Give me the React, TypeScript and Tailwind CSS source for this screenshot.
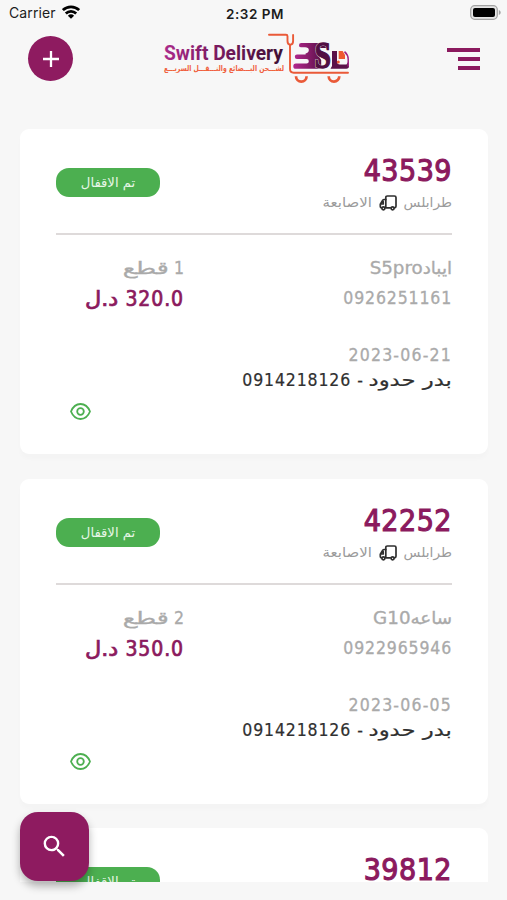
import { MdSearch } from 'react-icons/md';

interface Shipment {
  id: string;
  status: string;
  city: string;
  area: string;
  item: string;
  phone: string;
  pieces: number;
  price: string;
  date: string;
  customer: string;
  contact: string;
}

const shipments: Shipment[] = [
  {
    id: '43539',
    status: 'تم الاقفال',
    city: 'طرابلس',
    area: 'الاصابعة',
    item: 'ايبادS5pro',
    phone: '0926251161',
    pieces: 1,
    price: '320.0',
    date: '2023-06-21',
    customer: 'بدر حدود',
    contact: '0914218126',
  },
  {
    id: '42252',
    status: 'تم الاقفال',
    city: 'طرابلس',
    area: 'الاصابعة',
    item: 'ساعهG10',
    phone: '0922965946',
    pieces: 2,
    price: '350.0',
    date: '2023-06-05',
    customer: 'بدر حدود',
    contact: '0914218126',
  },
];

const nextShipment = { id: '39812', status: 'تم الاقفال' };

function StatusBar() {
  return (
    <div className="grid h-7 grid-cols-3 items-center pl-[9px] pr-[6px] font-['Inter',sans-serif] text-[14px] text-[#1c1c1c]">
      <div className="-mt-1 flex items-center gap-[6px]">
        <span className="tracking-[0.1px]">Carrier</span>
        <svg width="18" height="14" viewBox="0 0 18 14" fill="none" stroke="#000" strokeWidth="2.7">
          <path d="M0.9 5.1a11.6 11.6 0 0 1 16.2 0" />
          <path d="M3.8 8.5a7.4 7.4 0 0 1 10.4 0" />
          <path d="M9 13.8 5.9 10.7a4.5 4.5 0 0 1 6.200 0Z" fill="#000" stroke="none" />
        </svg>
      </div>
      <span className="text-center text-[13.500px] font-semibold tracking-[0.500px]">2:32 PM</span>
      <svg className="-mt-[3px] justify-self-end" width="31" height="15" viewBox="0 0 31 15">
        <rect x="0.700" y="0.700" width="26.600" height="13.600" rx="4" fill="#e6e6e6" stroke="#a3a3a3" strokeWidth="1.300" />
        <rect x="3" y="3" width="22" height="9" rx="2" fill="#000" />
        <path d="M28.800 5v5c1.200-.5 1.900-1.400 1.900-2.500S30 5.500 28.800 5Z" fill="#a3a3a3" />
      </svg>
    </div>
  );
}

function Logo() {
  return (
    <svg width="188" height="52" viewBox="0 0 188 52" fill="none">
      <defs>
        <linearGradient id="word" gradientUnits="userSpaceOnUse" x1="2" y1="0" x2="120" y2="0">
          <stop offset="0" stopColor="#ab2a8b" />
          <stop offset="0.45" stopColor="#7a1a60" />
          <stop offset="1" stopColor="#3f0f35" />
        </linearGradient>
        <linearGradient id="mark" gradientUnits="userSpaceOnUse" x1="132" y1="0" x2="166" y2="0">
          <stop offset="0" stopColor="#b0278c" />
          <stop offset="0.4" stopColor="#8a1c6c" />
          <stop offset="1" stopColor="#430d37" />
        </linearGradient>
      </defs>
      <text
        x="2"
        y="26.500"
        textLength="119"
        lengthAdjust="spacingAndGlyphs"
        fill="url(#word)"
        className="font-['Roboto',sans-serif] text-[19.500px] font-bold"
      >
        Swift Delivery
      </text>
      <text
        x="122"
        y="38"
        direction="rtl"
        textLength="120"
        lengthAdjust="spacingAndGlyphs"
        fill="#f0603c"
        className="font-['DejaVu_Sans',sans-serif] text-[8px] font-bold"
      >
        لشـــحن البـــضائع والنـــقـــل السريـــع
      </text>
      <g stroke="#ea5a38" strokeWidth="1.900" strokeLinecap="round" strokeLinejoin="round">
        <path d="M107 1.800h17q1.500 0 1.500 1.500V8q0 3.700 2.800 3.700T131.100 8V2" />
        <path d="M128 12V36q0 3.700 3.700 3.700H186" />
        <path d="M134 43.300a5.300 5.300 0 0 0 10.600 0" strokeWidth="2.700" strokeLinecap="butt" />
        <path d="M166.700 43.300a5.300 5.300 0 0 0 10.600 0" strokeWidth="2.700" strokeLinecap="butt" />
      </g>
      <path
        d="M139.200 10h26v5h-8l-2 6 4 6v8.800h-25.300a2.600 2.600 0 0 1 0-5.200h10.600a2.200 2.200 0 0 0 0-4.600H135a2.200 2.200 0 0 1 0-4.400h8.500a2 2 0 0 0 0-1.600h-4.300v-.4h5a1.800 1.800 0 0 0 0-5.200h-5a2.200 2.200 0 0 1 0-4.400Z"
        fill="url(#mark)"
      />
      <path d="M137 14.600h6a3 3 0 0 1 0 6h-6Z" fill="#f7f7f7" />
      <text x="152.500" y="35.300" fill="#f7f7f7" stroke="#f7f7f7" strokeWidth="1.800" textLength="16.500" lengthAdjust="spacingAndGlyphs" className="font-['Liberation_Serif',serif] text-[37px] font-bold">
        S
      </text>
      <text x="152.500" y="35.300" fill="#510f43" stroke="#510f43" strokeWidth="1.300" textLength="16.500" lengthAdjust="spacingAndGlyphs" className="font-['Liberation_Serif',serif] text-[37px] font-bold">
        S
      </text>
      <path d="M170 18h5v10.500q0 3 3 3h6.500l2.500-4V33q0 2.700-2.700 2.700h-15.800l1.500-2.700Z" fill="#5b1149" />
      <path d="M176.700 18h4l2.300 4v4h-6.300Z" fill="#ee5930" />
      <path d="M182.500 18.600q3.700 3.400 3.700 7.400v7.500" stroke="#a32484" strokeWidth="1.500" />
      <circle cx="176.300" cy="29" r="1.500" fill="#ee5930" />
    </svg>
  );
}

function TruckIcon() {
  return (
    <svg width="18" height="16" viewBox="0 0 18 16" fill="none" stroke="#2f2f2f" strokeWidth="1.700" strokeLinejoin="round" strokeLinecap="round">
      <path d="M6.800 12.800V2.600Q6.800 1 8.400 1h7Q17 1 17 2.600v8.600q0 1.600-1.600 1.600M6.800 12.800h4.600" />
      <path d="M6.800 4.500H5.300q-1.100 0-1.700 1L1.300 9.200v2.300q0 1.300 1 1.300M1.500 9h2.700V6.500" />
      <circle cx="4.400" cy="13.300" r="1.500" />
      <circle cx="13.600" cy="13.300" r="1.500" />
    </svg>
  );
}

function EyeIcon() {
  return (
    <svg width="21" height="17" viewBox="0 0 21 17" fill="none" stroke="#4caf50" strokeWidth="1.800">
      <path d="M1 8.500C3 3.600 6.500 1 10.500 1s7.500 2.600 9.500 7.500C18 13.400 14.500 16 10.500 16S3 13.400 1 8.500Z" strokeLinejoin="round" />
      <circle cx="10.500" cy="8.500" r="3.300" />
    </svg>
  );
}

function ShipmentId({ id }: { id: string }) {
  return (
    <span className="h-9 text-[30px] leading-[35px] tracking-[0.500px] text-[#8b1a5e] [-webkit-text-stroke:1.100px_#8b1a5e]">
      {id}
    </span>
  );
}

function StatusBadge({ label }: { label: string }) {
  return (
    <span className="mt-[15px] flex h-[29px] w-[104px] items-center justify-center rounded-[13px] bg-[#4caf50] pt-px font-['DejaVu_Sans',sans-serif] text-[13.200px] text-[#e6f6e6] [font-stretch:normal]">
      {label}
    </span>
  );
}

function ShipmentCard({ shipment }: { shipment: Shipment }) {
  return (
    <article className="h-[325px] shrink-0 rounded-[9px] bg-white px-9 pt-6 shadow-[0_5px_4px_rgba(0,0,0,0.015)]">
      <div className="flex h-[80px] items-start justify-between">
        <div className="flex flex-col items-start">
          <ShipmentId id={shipment.id} />
          <div className="flex h-7 items-center gap-[7px] font-['DejaVu_Sans',sans-serif] text-[13px] text-[#9b9b9b] [font-stretch:normal]">
            <span className="w-12 origin-right scale-x-[1.06] whitespace-nowrap">{shipment.city}</span>
            <TruckIcon />
            <span className="origin-right scale-x-[1.15]">{shipment.area}</span>
          </div>
        </div>
        <StatusBadge label={shipment.status} />
      </div>

      <div className="h-[2px] bg-[#dedada]" />

      <div className="flex justify-between pt-[17px] text-[17.500px] text-[#aaa] [-webkit-text-stroke:0.300px_#aaa]">
        <div className="flex flex-col items-start">
          <span className="h-[31px] origin-right scale-x-[1.160] leading-[32px]">{shipment.item}</span>
          <span className="h-[31px] leading-[31px] tracking-[0.850px]">{shipment.phone}</span>
        </div>
        <div className="flex w-[128px] flex-col">
          <span className="flex h-[31px] gap-[5px] leading-[32px]">
            <span>{shipment.pieces}</span>
            <span className="origin-right scale-x-[1.6]">قطع</span>
          </span>
          <span className="flex h-[31px] gap-[7px] text-[21px] leading-[33px] text-[#8b1a5e] [-webkit-text-stroke:0.700px_#8b1a5e]">
            <span className="tracking-[0.900px]">{shipment.price}</span>
            <span className="origin-right scale-x-[1.18]">د.ل</span>
          </span>
        </div>
      </div>

      <div className="flex flex-col items-start pt-[29px] text-[17.500px]">
        <span className="h-[25px] leading-[25px] tracking-[1.200px] text-[#aaa] [-webkit-text-stroke:0.300px_#aaa]">
          {shipment.date}
        </span>
        <div className="flex h-[25px] leading-[25px] text-[#303030] [-webkit-text-stroke:0.200px_#303030]">
          <span className="w-[89px] whitespace-nowrap">
            <span className="inline-block origin-right scale-x-[1.440]">{shipment.customer}</span>
          </span>
          <span className="w-[7px]">-</span>
          <span className="pr-[5px] tracking-[0.850px]">{shipment.contact}</span>
        </div>
      </div>
      <div className="flex justify-end pl-[14px] pt-[10px]">
        <EyeIcon />
      </div>
    </article>
  );
}

export default function App() {
  return (
    <div className="relative flex h-[900px] w-[507px] flex-col overflow-hidden bg-[#f7f7f7]">
      <StatusBar />
      <header className="flex h-[101px] items-start justify-between pl-7 pr-[27px]">
        <button className="mt-[8px] flex size-[45px] items-center justify-center rounded-full bg-[#8e1b60]" aria-label="إضافة">
          <svg width="18" height="18" viewBox="0 0 18 18" stroke="#fff" strokeWidth="2.300">
            <path d="M9 1v16M1 9h16" />
          </svg>
        </button>
        <div className="mr-[8px] mt-[5px]">
          <Logo />
        </div>
        <button className="mt-[20px] flex w-[33px] flex-col items-end gap-[5px]" aria-label="القائمة">
          <span className="h-[4px] w-[33px] bg-[#8b1a5e]" />
          <span className="h-[4px] w-[22px] bg-[#8b1a5e]" />
          <span className="h-[4px] w-[22px] bg-[#8b1a5e]" />
        </button>
      </header>

      <main
        dir="rtl"
        className="flex h-[753px] flex-col gap-[24.500px] overflow-hidden pl-[20px] pr-[19px] font-['DejaVu_Sans_Condensed','DejaVu_Sans',sans-serif] [font-stretch:condensed]"
      >
        {shipments.map((shipment) => (
          <ShipmentCard key={shipment.id} shipment={shipment} />
        ))}
        {/* only the top of the next card is in view */}
        <article className="flex h-[54px] shrink-0 items-start justify-between overflow-hidden rounded-t-[9px] bg-white px-9 pt-6">
          <ShipmentId id={nextShipment.id} />
          <StatusBadge label={nextShipment.status} />
        </article>
      </main>

      <button
        className="absolute left-[20px] top-[812px] flex size-[69px] items-center justify-center rounded-[18px] bg-[#8e1b60] text-white shadow-[0_5px_8px_rgba(0,0,0,0.3)]"
        aria-label="بحث"
      >
        <MdSearch size={29} />
      </button>
    </div>
  );
}
